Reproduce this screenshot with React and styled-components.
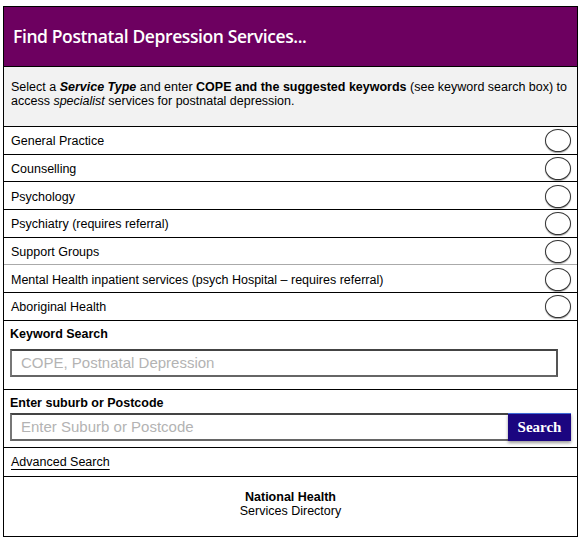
import React from "react";
import styled, { createGlobalStyle } from "styled-components";

const Global = createGlobalStyle`
  html, body { margin: 0; padding: 0; background: #fff; }
  body { font-family: "Liberation Sans", Arial, sans-serif; }
  * { box-sizing: border-box; }
`;

const Page = styled.div`
  padding: 6px 4px 0 3px;
`;

const Widget = styled.div`
  width: 575px;
  border: 1px solid #000;
  display: flex;
  flex-direction: column;
  color: #000;
  font-size: 12.5px;
`;

const Header = styled.div`
  background: #6d0060;
  height: 60px;
  display: flex;
  align-items: center;
  padding: 0 0 2px 9px;
  border-bottom: 1px solid #000;
`;

const Title = styled.h1`
  margin: 0;
  color: #fff;
  font-family: "Open Sans", "Liberation Sans", sans-serif;
  font-weight: 600;
  font-size: 17.5px;
  letter-spacing: -0.4px;
`;

const Intro = styled.div`
  background: #f2f2f2;
  height: 60px;
  padding: 13px 6px 0 7px;
  line-height: 14px;
  border-bottom: 1px solid #000;
`;

const Row = styled.label`
  height: 27.66px;
  display: flex;
  align-items: center;
  justify-content: space-between;
  padding: 0 6px 0 7px;
  border-bottom: 1px solid ${(p) => (p.$light ? "#aaa" : "#000")};
`;

const RowText = styled.span`
  padding-top: 2px;
`;

const Radio = styled.span`
  width: 26px;
  height: 23px;
  border-radius: 50%;
  border: 1px solid #333;
  background: #fff;
  box-shadow: 0 1px 1px rgba(0, 0, 0, 0.35);
  margin-top: 1px;
`;

const Section = styled.div`
  display: flex;
  flex-direction: column;
  padding: ${(p) => p.$pad};
  border-bottom: 1px solid #000;
  height: ${(p) => p.$h}px;
`;

const Label = styled.div`
  font-weight: bold;
  margin-bottom: ${(p) => p.$gap}px;
`;

const Input = styled.div`
  height: 28px;
  width: ${(p) => p.$w}px;
  border: 2px solid #555;
  border-top-color: #444;
  border-left-color: #777;
  border-bottom-color: #666;
  background: #fff;
  display: flex;
  align-items: center;
  padding-left: 9px;
  color: #b3b3b3;
  font-size: 15px;
`;

const InputRow = styled.div`
  display: flex;
  align-items: center;
`;

const SearchButton = styled.button`
  height: 28px;
  width: 63px;
  margin-left: -2px;
  background: #1b0580;
  color: #fff;
  border: none;
  border-top: 1px solid #3f6ad8;
  font-family: "Liberation Serif", Georgia, serif;
  font-weight: bold;
  font-size: 15px;
  box-shadow: 0 2px 3px rgba(0, 0, 0, 0.4);
  padding: 0;
`;

const LinkBar = styled.div`
  height: 29px;
  display: flex;
  align-items: center;
  padding: 0 7px;
  border-bottom: 1px solid #000;
`;

const Link = styled.a`
  color: #000;
  text-decoration: underline;
  text-underline-offset: 3px;
`;

const Footer = styled.div`
  height: 59px;
  display: flex;
  flex-direction: column;
  align-items: center;
  padding-top: 13px;
  line-height: 14px;
`;

const services = [
  "General Practice",
  "Counselling",
  "Psychology",
  "Psychiatry (requires referral)",
  "Support Groups",
  "Mental Health inpatient services (psych Hospital \u2013 requires referral)",
  "Aboriginal Health",
];

export default function App() {
  return (
    <Page>
      <Global />
      <Widget>
        <Header>
          <Title>Find Postnatal Depression Services...</Title>
        </Header>
        <Intro>
          Select a <b><i>Service Type</i></b> and enter <b>COPE and the suggested keywords</b> (see keyword search box) to
          access <i>specialist</i> services for postnatal depression.
        </Intro>
        {services.map((s, i) => (
          <Row key={s} $light={i === 4}>
            <RowText>{s}</RowText>
            <Radio />
          </Row>
        ))}
        <Section $pad="6px 19px 0 6px" $h={69}>
          <Label $gap={8}>Keyword Search</Label>
          <Input $w={548}>COPE, Postnatal Depression</Input>
        </Section>
        <Section $pad="6px 0 0 6px" $h={58}>
          <Label $gap={3}>Enter suburb or Postcode</Label>
          <InputRow>
            <Input $w={500}>Enter Suburb or Postcode</Input>
            <SearchButton>Search</SearchButton>
          </InputRow>
        </Section>
        <LinkBar>
          <Link href="#">Advanced Search</Link>
        </LinkBar>
        <Footer>
          <b>National Health</b>
          <span>Services Directory</span>
        </Footer>
      </Widget>
    </Page>
  );
}
